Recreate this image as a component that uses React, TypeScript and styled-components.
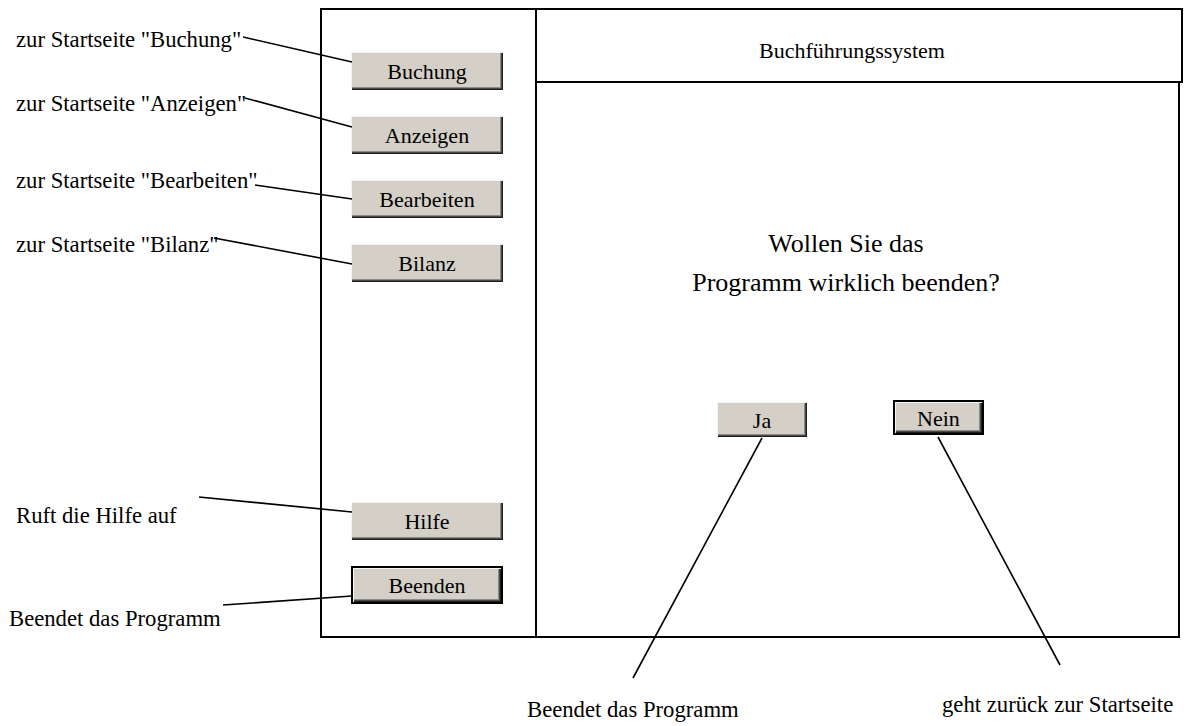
import React from "react";
import styled, { createGlobalStyle } from "styled-components";

const GlobalStyle = createGlobalStyle`
  html, body {
    margin: 0;
    padding: 0;
    background: #ffffff;
  }
  body {
    font-family: "Liberation Serif", "Times New Roman", serif;
    color: #000000;
  }
`;

const Canvas = styled.div`
  position: relative;
  box-sizing: border-box;
  width: 1186px;
  height: 726px;
  padding: 8px 0 0 320px;
  overflow: hidden;
`;

const Window = styled.div`
  display: flex;
  width: 863px;
  height: 630px;
`;

const Sidebar = styled.nav`
  box-sizing: border-box;
  width: 217px;
  height: 630px;
  border: 2px solid #000;
  padding: 42px 0 32px 29px;
  display: flex;
  flex-direction: column;
  justify-content: space-between;
`;

const NavGroup = styled.div`
  display: flex;
  flex-direction: column;
  gap: 26px;
`;

const MainColumn = styled.div`
  display: flex;
  flex-direction: column;
  width: 646px;
`;

const Header = styled.header`
  box-sizing: border-box;
  height: 75px;
  border: 2px solid #000;
  border-left: none;
  display: flex;
  align-items: center;
  justify-content: center;
  padding: 10px 14px 0 0;
  font-size: 22px;
`;

const Content = styled.main`
  box-sizing: border-box;
  width: 643px;
  flex: 1;
  border-right: 2px solid #000;
  border-bottom: 2px solid #000;
  padding-top: 141px;
  display: flex;
  flex-direction: column;
`;

const Question = styled.p`
  margin: 0;
  padding-right: 23px;
  text-align: center;
  font-size: 26px;
  line-height: 39px;
`;

const ChoiceRow = styled.div`
  display: flex;
  align-items: flex-start;
  gap: 86px;
  margin-top: 98px;
  padding-left: 180px;
`;

const Button = styled.button<{ $w: number; $h: number; $primary?: boolean; $drop?: number }>`
  box-sizing: border-box;
  width: ${(p) => p.$w}px;
  height: ${(p) => p.$h}px;
  margin: ${(p) => p.$drop || 0}px 0 0 0;
  padding: 2px 0 0 0;
  background: #d4d0c8;
  border: ${(p) => (p.$primary ? "2px solid #000" : "none")};
  border-radius: 0;
  box-shadow: inset 1px 1px #f6f4f0, inset -1px -1px #1e1e1e,
    inset -2px -2px #4a4a4a, inset -3px -3px #8c8a86;
  font-family: "Liberation Serif", "Times New Roman", serif;
  font-size: 22px;
  color: #000;
  cursor: pointer;
`;

const Note = styled.span<{ $x: number; $y: number }>`
  position: absolute;
  left: ${(p) => p.$x}px;
  top: ${(p) => p.$y}px;
  font-size: 22.7px;
  line-height: 1;
  white-space: nowrap;
`;

const Leaders = styled.svg`
  position: absolute;
  left: 0;
  top: 0;
  pointer-events: none;
`;

const notes = [
  { x: 16, y: 29, text: 'zur Startseite "Buchung"' },
  { x: 16, y: 93, text: 'zur Startseite "Anzeigen"' },
  { x: 16, y: 170, text: 'zur Startseite "Bearbeiten"' },
  { x: 16, y: 234, text: 'zur Startseite "Bilanz"' },
  { x: 16, y: 505, text: "Ruft die Hilfe auf" },
  { x: 9, y: 608, text: "Beendet das Programm" },
  { x: 527, y: 699, text: "Beendet das Programm" },
  { x: 942, y: 694, text: "geht zurück zur Startseite" },
];

const lines = [
  [243, 37, 352, 62],
  [245, 98, 352, 127],
  [255, 185, 352, 199],
  [214, 238, 352, 264],
  [199, 497, 352, 512],
  [223, 605, 352, 596],
  [762, 438, 633, 678],
  [938, 437, 1060, 665],
];

export default function App() {
  return (
    <>
      <GlobalStyle />
      <Canvas>
        <Window>
          <Sidebar>
            <NavGroup>
              <Button $w={152} $h={38}>Buchung</Button>
              <Button $w={152} $h={38}>Anzeigen</Button>
              <Button $w={152} $h={38}>Bearbeiten</Button>
              <Button $w={152} $h={38}>Bilanz</Button>
            </NavGroup>
            <NavGroup>
              <Button $w={152} $h={38}>Hilfe</Button>
              <Button $w={152} $h={38} $primary>Beenden</Button>
            </NavGroup>
          </Sidebar>
          <MainColumn>
            <Header>Buchführungssystem</Header>
            <Content>
              <Question>
                Wollen Sie das
                <br />
                Programm wirklich beenden?
              </Question>
              <ChoiceRow>
                <Button $w={90} $h={35} $drop={2}>Ja</Button>
                <Button $w={91} $h={35} $primary>Nein</Button>
              </ChoiceRow>
            </Content>
          </MainColumn>
        </Window>

        {notes.map((n, i) => (
          <Note key={i} $x={n.x} $y={n.y}>
            {n.text}
          </Note>
        ))}

        <Leaders width={1186} height={726}>
          {lines.map(([x1, y1, x2, y2], i) => (
            <line key={i} x1={x1} y1={y1} x2={x2} y2={y2} stroke="#000" strokeWidth={1.6} />
          ))}
        </Leaders>
      </Canvas>
    </>
  );
}
